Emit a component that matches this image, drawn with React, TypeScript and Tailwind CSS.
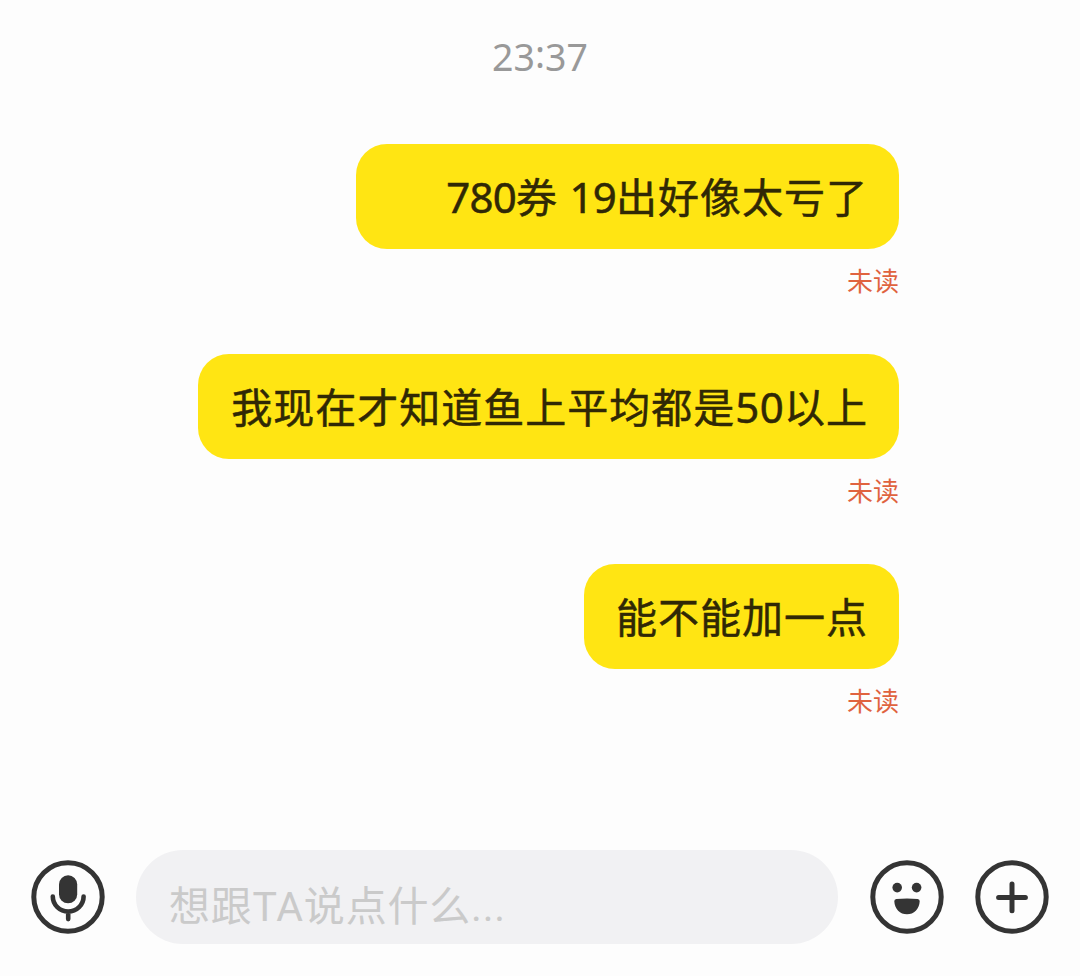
import React, { useState } from 'react';
import clsx from 'clsx';

interface Message {
  id: number;
  text: string;
  read: boolean;
  className: string;
  numberClassName?: string;
}

const messages: Message[] = [
  {
    id: 1,
    text: '780券 19出好像太亏了',
    read: false,
    className: 'w-[543px]',
    numberClassName: 'text-[42px] tracking-[-0.8px]',
  },
  {
    id: 2,
    text: '我现在才知道鱼上平均都是50以上',
    read: false,
    className: 'w-[701px]',
    numberClassName: 'text-[42px] tracking-[0.3px]',
  },
  { id: 3, text: '能不能加一点', read: false, className: 'w-[315px]' },
];

const MicIcon: React.FC = () => (
  <svg viewBox="0 0 74 74" className="size-[74px]" fill="none" stroke="#343434">
    <circle cx="37" cy="37" r="34.2" strokeWidth="5" />
    <rect x="28" y="15.3" width="18.2" height="28" rx="9.1" fill="#343434" stroke="none" />
    <path d="M21.8 36.5a15.4 15 0 0 0 30.8 0M37.2 51.5v7.6" strokeWidth="4.6" strokeLinecap="round" />
  </svg>
);

const SmileIcon: React.FC = () => (
  <svg viewBox="0 0 74 74" className="size-[74px]" fill="#343434">
    <circle cx="37" cy="37" r="34.2" fill="none" stroke="#343434" strokeWidth="5" />
    <circle cx="27.2" cy="27.6" r="4.8" />
    <circle cx="46.6" cy="27.6" r="4.8" />
    <path d="M26.4 38.9Q37 38.3 47.6 38.9Q49.8 39.1 49.7 41.2C49.4 49 44 54.3 37 54.3S24.6 49 24.3 41.2Q24.2 39.1 26.4 38.9Z" />
  </svg>
);

const PlusIcon: React.FC = () => (
  <svg viewBox="0 0 74 74" className="size-[74px]" fill="none" stroke="#343434">
    <circle cx="37" cy="37" r="34.2" strokeWidth="5" />
    <path d="M37 24v26.8M23.6 37.4h26.8" strokeWidth="5" strokeLinecap="round" />
  </svg>
);

const MessageRow: React.FC<{ message: Message }> = ({ message }) => (
  <div className="flex h-[210px] flex-col items-end">
    <div
      className={clsx(
        'flex h-[105px] items-center justify-end rounded-[31px] bg-[#ffe513] pr-[31px] text-[41px] leading-[60px] tracking-[1px] text-[#302805] [-webkit-text-stroke:0.5px_#302805]',
        message.className
      )}
    >
      <span className="whitespace-nowrap">
        {/* Numbers are spaced tighter than the characters around them */}
        {message.text.split(/(\d+)/).map((part, i) =>
          /^\d+$/.test(part) ? (
            <span key={i} className={message.numberClassName}>{part}</span>
          ) : (
            part
          )
        )}
      </span>
    </div>
    {!message.read && (
      <span className="mt-[13px] text-[26px] leading-[38px] text-[#e0633f]">未读</span>
    )}
  </div>
);

const App: React.FC = () => {
  const [draft, setDraft] = useState('');

  return (
    <div className="flex h-[976px] w-[1080px] flex-col overflow-hidden bg-[#fdfdfd] font-['Noto_Sans','Noto_Sans_CJK_SC',sans-serif]">
      <div className="flex h-36 justify-center pt-[33px] text-[37.5px] leading-[48px] text-[#999999]">
        <span>23</span>
        <span className="-mt-[3px]">:</span>
        <span>37</span>
      </div>

      <div className="flex-1 pr-[181px]">
        {messages.map(message => (
          <MessageRow key={message.id} message={message} />
        ))}
      </div>

      {/* Input bar */}
      <div className="flex h-[126px] items-start pl-[31px]">
        <button className="mt-[10px]" aria-label="voice">
          <MicIcon />
        </button>
        <input
          value={draft}
          onChange={e => setDraft(e.target.value)}
          placeholder="想跟TA说点什么..."
          className="ml-[31px] h-[94px] w-[702px] rounded-full bg-[#f1f1f3] pt-[19px] pl-[33px] font-['Roboto','Noto_Sans_CJK_SC',sans-serif] text-[41px] tracking-[0.8px] text-[#333333] outline-none placeholder:text-[#cacaca]"
        />
        <button className="mt-[10px] ml-[32px]" aria-label="emoji">
          <SmileIcon />
        </button>
        <button className="mt-[10px] ml-[31px]" aria-label="more">
          <PlusIcon />
        </button>
      </div>
    </div>
  );
};

export default App;
